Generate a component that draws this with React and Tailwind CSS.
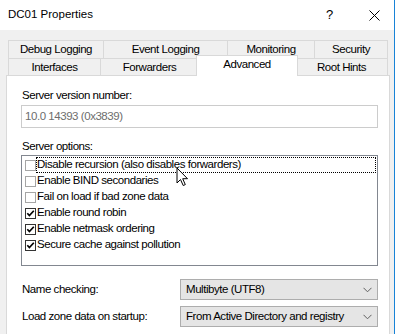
import React from 'react';

const options = [
    { label: 'Disable recursion (also disables forwarders)', checked: false, focus: true },
    { label: 'Enable BIND secondaries', checked: false },
    { label: 'Fail on load if bad zone data', checked: false },
    { label: 'Enable round robin', checked: true },
    { label: 'Enable netmask ordering', checked: true },
    { label: 'Secure cache against pollution', checked: true },
];

const Check = ({ checked }) => (
    <span
        className={
            'flex h-[11px] w-[11px] shrink-0 items-center justify-center border bg-white ' +
            (checked ? 'border-[#333333]' : 'border-[#a5a5a5]')
        }
    >
        {checked && (
            <svg width="9" height="9" viewBox="0 0 9 9">
                <path d="M1.3 4.3 L3.4 6.6 L7.8 1.8" fill="none" stroke="#000" strokeWidth="1.7" />
            </svg>
        )}
    </span>
);

const Chevron = () => (
    <svg width="9" height="6" viewBox="0 0 9 6" className="mr-[5px]">
        <path d="M0.5 0.8 L4.5 4.8 L8.5 0.8" fill="none" stroke="#606060" strokeWidth="1" />
    </svg>
);

const Select = ({ value }) => (
    <div className="flex h-[21px] w-[198px] items-center justify-between border border-[#adadad] bg-[#e5e5e5] pl-[5px]">
        <span>{value}</span>
        <Chevron />
    </div>
);

const App = () => {
    return (
        <div className="relative h-[334px] w-[399px] overflow-hidden bg-white font-['Liberation_Sans',Arial,sans-serif] text-[11.5px] tracking-[-0.45px] text-black">
            <div className="flex h-full w-[395px] flex-col border-r border-[#1883d7]">
                {/* Title bar */}
                <div className="flex h-[30px] shrink-0 items-center bg-white pl-[8px]">
                    <span className="text-[11.5px] tracking-normal">DC01 Properties</span>
                    <span className="ml-[233px] text-[13px] tracking-normal">?</span>
                    <svg width="11" height="11" viewBox="0 0 11 11" className="ml-[36px]">
                        <path d="M0.5 0.5 L10.5 10.5 M10.5 0.5 L0.5 10.5" stroke="#000" strokeWidth="1" />
                    </svg>
                </div>

                {/* Dialog body */}
                <div className="flex-1 bg-[#f0f0f0] pl-[6px] pt-[10px]">
                    {/* Tab row 1 */}
                    <div className="ml-[2px] flex h-[18px]">
                        <div className="flex w-[96px] items-center justify-center border border-b-0 border-[#d9d9d9]">Debug Logging</div>
                        <div className="-ml-px flex w-[125px] items-center justify-center border border-b-0 border-[#d9d9d9]">Event Logging</div>
                        <div className="-ml-px flex w-[88px] items-center justify-center border border-b-0 border-[#d9d9d9]">Monitoring</div>
                        <div className="-ml-px flex w-[74px] items-center justify-center border border-b-0 border-[#d9d9d9]">Security</div>
                    </div>
                    {/* Tab row 2 */}
                    <div className="ml-[2px] flex h-[17px] items-start">
                        <div className="flex h-[17px] w-[93px] items-center justify-center border border-b-0 border-[#d9d9d9] pt-px">Interfaces</div>
                        <div className="-ml-px flex h-[17px] w-[99px] items-center justify-center border border-b-0 border-[#d9d9d9] pt-px">Forwarders</div>
                        <div className="relative z-10 -mt-[3px] ml-[-3px] flex h-[21px] w-[102px] items-center justify-center border border-b-0 border-[#d9d9d9] bg-white pb-[2px]">Advanced</div>
                        <div className="ml-[-3px] flex h-[17px] w-[93px] items-center justify-center border border-b-0 border-[#d9d9d9] pt-px">Root Hints</div>
                    </div>

                    {/* Panel */}
                    <div className="h-[300px] w-[384px] border border-[#d9d9d9] bg-white pl-[14px] pt-[12px]">
                        <div className="pl-px leading-[14px]">Server version number:</div>
                        <div className="mt-[3px] flex h-[23px] w-[357px] items-center border border-[#cccccc] bg-white pl-[3px] text-[#6d6d6d]">
                            10.0 14393 (0x3839)
                        </div>

                        <div className="mt-[11px] pl-px leading-[14px]">Server options:</div>
                        <div className="mt-[2px] h-[111px] w-[357px] border border-[#828790] bg-white pl-[3px] pt-px">
                            {options.map((o) => (
                                <div key={o.label} className="flex h-[16px] items-center">
                                    <Check checked={o.checked} />
                                    <span
                                        className={
                                            'mr-px flex h-[16px] flex-1 items-center border ' +
                                            (o.focus ? 'border-dotted border-black' : 'border-transparent')
                                        }
                                    >
                                        {o.label}
                                    </span>
                                </div>
                            ))}
                        </div>

                        <div className="mt-[13px] flex items-center">
                            <span className="w-[159px] pl-px">Name checking:</span>
                            <Select value="Multibyte (UTF8)" />
                        </div>
                        <div className="mt-[6px] flex items-center">
                            <span className="w-[159px] pl-px">Load zone data on startup:</span>
                            <Select value="From Active Directory and registry" />
                        </div>
                    </div>
                </div>
            </div>

            {/* Mouse pointer */}
            <svg
                width="13"
                height="20"
                viewBox="0 0 13 20"
                className="absolute left-[176px] top-[167px] z-20"
            >
                <path
                    d="M1 1 L1 16 L4.5 12.5 L7.2 18.5 L9.3 17.6 L6.7 11.7 L11.5 11.7 Z"
                    fill="#fff"
                    stroke="#000"
                    strokeWidth="1"
                    strokeLinejoin="miter"
                />
            </svg>
        </div>
    );
};

export default App;
